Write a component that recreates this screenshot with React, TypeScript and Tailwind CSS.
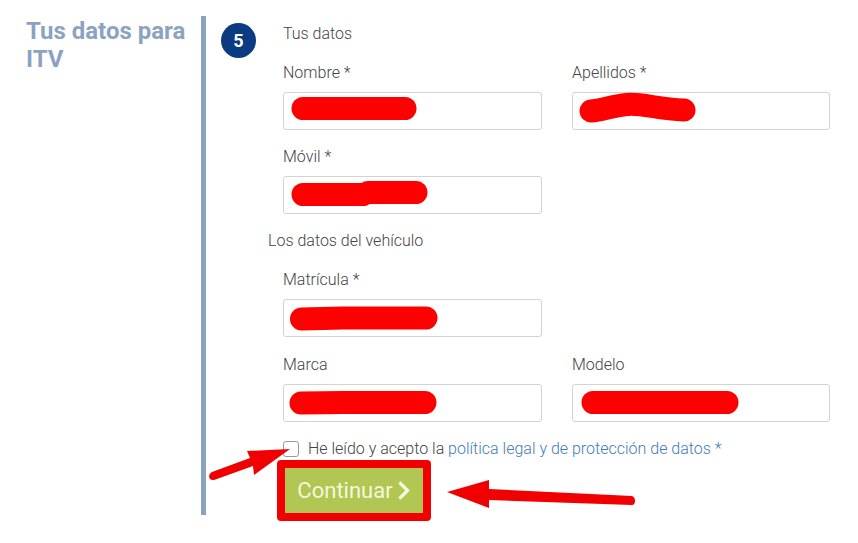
import type { ReactNode } from "react";
import { FaChevronRight } from "react-icons/fa";

interface FieldProps {
  label: string;
  scribble: ReactNode;
  className?: string;
}

const Field = ({ label, scribble, className }: FieldProps) => (
  <div className={className}>
    <label className="block pt-px text-[16px] leading-[20px] font-light text-[#444]">{label}</label>
    <div className="relative mt-[9px] h-[38px] w-full rounded-[3px] border border-[#d3d3d3] bg-white">
      <svg className="absolute -left-px -top-px overflow-visible" width="259" height="38" fill="none" stroke="#ff0000" strokeWidth="23" strokeLinecap="round">
        {scribble}
      </svg>
    </div>
  </div>
);

const App = () => {
  return (
    <div className="relative h-[543px] w-[858px] overflow-hidden bg-white font-['Roboto',sans-serif]">
      <div className="flex pt-[16px]">
        <h2 className="w-[201px] pl-[26px] pr-2 pt-px text-[24px] leading-[28px] font-bold text-[#8ba3c1]">Tus datos para ITV</h2>
        <div className="flex h-[499px] w-[657px] border-l-[5px] border-[#8ba3c1]">
          <div className="ml-[15px] mt-[7px] flex h-[35px] w-[35px] items-center justify-center rounded-full bg-[#0b3b80] text-[18px] font-bold text-white">5</div>
          <div className="ml-[27px] flex-1">
            <p className="mt-[8px] text-[16px] leading-[20px] font-light text-[#444]">Tus datos</p>
            <div className="mt-[18px] flex gap-[30px]">
              <Field className="w-[259px]" label="Nombre *" scribble={<path d="M20 16.5H122" />} />
              <Field className="w-[258px]" label="Apellidos *" scribble={<path d="M19 19C30 18 40 14 55 12.5C70 11 85 17 112 18" />} />
            </div>
            <Field className="mt-[16px] w-[259px]" label="Móvil *" scribble={<><path d="M20 18.5H80" /><path d="M85 16.5H133" /></>} />
            <p className="-ml-[15px] mt-[17px] text-[16px] leading-[20px] font-light text-[#444]">Los datos del vehículo</p>
            <Field className="mt-[18px] w-[259px]" label="Matrícula *" scribble={<path d="M18.5 20L60 19H143" />} />
            <div className="mt-[17px] flex gap-[30px]">
              <Field className="w-[259px]" label="Marca" scribble={<path d="M18 19L60 18.5H142" />} />
              <Field className="w-[258px]" label="Modelo" scribble={<path d="M21 18.5H155" />} />
            </div>
            <div className="mt-[19px] flex items-center">
              <span className="h-[16px] w-[16px] rounded-[3px] border border-[#999] bg-white" />
              <span className="ml-[9px] whitespace-nowrap text-[16px] leading-[16px] font-light text-[#444]">
                He leído y acepto la <a className="text-[#3f7cb8]">política legal y de protección de datos *</a>
              </span>
            </div>
            <button className="-ml-[6px] mt-[3px] flex h-[61px] w-[154px] items-center justify-center gap-[4px] rounded-[4px] border-[8px] border-[#f00000] bg-[#b1c653] text-[22px] text-[#f4f8dc]">
              Continuar
              <FaChevronRight className="h-[21px] w-[14px]" />
            </button>
          </div>
        </div>
      </div>
      <svg className="absolute left-0 top-0" width="858" height="543" fill="#f00000" stroke="none">
        <path d="M290 449L247 451L250 458L212 472C207 475 209 481 214 480L253 466L254 475Z" />
        <path d="M447 492L489 480V489L632 496C636 497 636 505 632 505L489 500V508Z" />
      </svg>
    </div>
  );
};

export default App;
